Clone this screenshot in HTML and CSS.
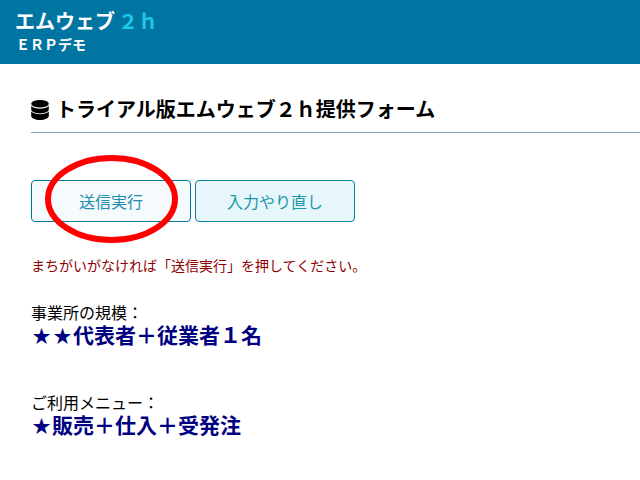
FILE: index.html
```html
<!DOCTYPE html>
<html lang="ja">
<head>
    <meta charset="UTF-8">
    <title>エムウェブ2h提供フォーム</title>
    <link rel="stylesheet" href="styles.css">
</head>
<body>
    <header class="top">
        <div class="brand">エムウェブ<span class="brand-em">２ｈ</span></div>
        <div class="sub">ＥＲＰデモ</div>
    </header>
    <main class="content">
        <h1 class="title">
            <svg class="db" viewBox="0 0 18 20" aria-hidden="true">
                <ellipse cx="9" cy="3.8" rx="8.800" ry="3.800"/>
                <path d="M.2 6.100C2 8 5.500 8.700 9 8.700s7-.7 8.800-2.600v3.500C17.800 11.700 13.800 13.400 9 13.400S.2 11.700.2 9.600z"/>
                <path d="M.2 11.600C2 13.500 5.500 14.300 9 14.300s7-.8 8.800-2.700v4.400C17.800 18.200 13.800 20 9 20S.2 18.200.2 16z"/>
            </svg>
            <span class="title-text">トライアル版エムウェブ２ｈ提供フォーム</span>
        </h1>
        <div class="buttons">
            <button class="btn btn-send">送信実行</button>
            <button class="btn btn-redo">入力やり直し</button>
            <svg class="circle" viewBox="0 0 135 90" aria-hidden="true">
                <ellipse cx="67.500" cy="45" rx="63.500" ry="41" />
            </svg>
        </div>
        <p class="note">まちがいがなければ「送信実行」を押してください。</p>
        <div class="item">
            <div class="label">事業所の規模：</div>
            <div class="value"><span class="star">★</span><span class="star">★</span>代表者＋従業者１名</div>
        </div>
        <div class="item">
            <div class="label">ご利用メニュー：</div>
            <div class="value"><span class="star">★</span>販売＋仕入＋受発注</div>
        </div>
    </main>
</body>
</html>
```

FILE: styles.css
```css
body{
    margin: 0;
    font-family: "Noto Sans CJK JP", "Noto Sans", sans-serif;
    color: #000;
    background: #fff;
    text-spacing-trim: space-all;
}
.top{
    height: 64px;
    box-sizing: border-box;
    padding: 6px 0 0 15px;
    background: #0075a1;
    color: #fff;
}
.brand{
    font-size: 20px;
    line-height: 30px;
    font-weight: bold;
}
.brand-em{
    margin-left: 3px;
    color: #1ec8e8;
}
.sub{
    margin: 0 0 0 1px;
    font-size: 14px;
    line-height: 17px;
    font-weight: bold;
}
.content{
    padding: 30px 0 0 31px;
}
.title{
    display: flex;
    align-items: center;
    gap: 7px;
    margin: 0;
    height: 32px;
    padding-bottom: 6px;
    border-bottom: 1px solid #8c9fb8;
    font-size: 20px;
    line-height: 30px;
    font-weight: bold;
}
.title-text{
    margin-top: -2px;
}
.db{
    width: 18px;
    height: 20px;
}
.buttons{
    position: relative;
    display: flex;
    gap: 4px;
    margin-top: 47px;
}
.btn{
    width: 160px;
    height: 42px;
    padding: 0;
    border: 1px solid #0078a0;
    border-radius: 4px;
    font-family: inherit;
    font-size: 16px;
    color: #1a8cb0;
}
.btn-send{
    background: #f5fbfd;
}
.btn-redo{
    border-color: #0089a0;
    background: #e6f6fa;
    color: #1a96aa;
}
.circle{
    position: absolute;
    left: 13px;
    top: -26px;
    width: 135px;
    height: 90px;
    fill: none;
    stroke: #f00;
    stroke-width: 6;
}
.note{
    margin: 33px 0 0;
    font-size: 14px;
    line-height: 20px;
    color: #900000;
}
.item{
    margin-top: 27px;
}
.item + .item{
    margin-top: 43px;
}
.label{
    font-size: 16px;
    line-height: 20px;
}
.value{
    margin-top: -2px;
    font-size: 21px;
    line-height: 28px;
    font-weight: bold;
    color: #000080;
}
.star{
    display: inline-block;
    width: 21px;
    font-size: 18px;
    text-align: center;
}
```
